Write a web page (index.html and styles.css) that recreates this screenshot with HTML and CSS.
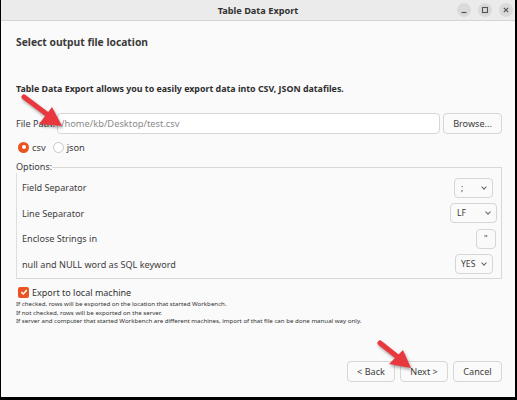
FILE: index.html
```html
<!DOCTYPE html>
<html>
<head>
<meta charset="utf-8">
<link rel="stylesheet" href="styles.css">
</head>
<body>
<div class="window">
  <div class="titlebar">
    <span class="title">Table Data Export</span>
    <div class="wbtns">
      <span class="wbtn"><svg width="14" height="14" viewBox="0 0 14 14"><path d="M4.5 9.5h5" stroke="#555" stroke-width="1.2"/></svg></span>
      <span class="wbtn"><svg width="14" height="14" viewBox="0 0 14 14"><rect x="4.5" y="4.5" width="5" height="5" fill="none" stroke="#555" stroke-width="1.1"/></svg></span>
      <span class="wbtn"><svg width="14" height="14" viewBox="0 0 14 14"><path d="M4.8 4.8l4.4 4.4M9.2 4.8l-4.4 4.4" stroke="#555" stroke-width="1.2"/></svg></span>
    </div>
  </div>
  <div class="content">
    <h1 class="heading">Select output file location</h1>
    <p class="desc">Table Data Export allows you to easily export data into CSV, JSON datafiles.</p>
    <div class="filerow">
      <span class="flabel">File Path:</span>
      <div class="input">/home/kb/Desktop/test.csv</div>
      <div class="btn browse">Browse...</div>
    </div>
    <div class="radios">
      <span class="radio on"></span><span class="rlabel">csv</span>
      <span class="radio"></span><span class="rlabel">json</span>
    </div>
    <fieldset class="options">
      <legend>Options:</legend>
      <div class="orow"><span>Field Separator</span><span class="combo c-sep">;<i class="chev"></i></span></div>
      <div class="orow"><span>Line Separator</span><span class="combo c-lf">LF<i class="chev"></i></span></div>
      <div class="orow"><span>Enclose Strings in</span><span class="combo c-q">"</span></div>
      <div class="orow"><span>null and NULL word as SQL keyword</span><span class="combo c-yes">YES<i class="chev"></i></span></div>
    </fieldset>
    <div class="checkrow">
      <span class="check"><svg width="10" height="10" viewBox="0 0 10 10"><path d="M2.3 5l2 2 3.6-4" fill="none" stroke="#fff" stroke-width="1.5"/></svg></span>
      <span class="clabel">Export to local machine</span>
    </div>
    <div class="notes">
      <div>If checked, rows will be exported on the location that started Workbench.</div>
      <div>If not checked, rows will be exported on the server.</div>
      <div>If server and computer that started Workbench are different machines, import of that file can be done manual way only.</div>
    </div>
    <div class="footer">
      <div class="btn fbtn">&lt; Back</div>
      <div class="btn fbtn">Next &gt;</div>
      <div class="btn fbtn">Cancel</div>
    </div>
  </div>
  <svg class="arrow a1" width="60" height="50" viewBox="0 0 60 50">
    <path d="M4 4 L28 22" stroke="#e8383d" stroke-width="5" stroke-linecap="round"/>
    <path d="M42 33 L19 31 L32 14 Z" fill="#e8383d"/>
  </svg>
  <svg class="arrow a2" width="50" height="40" viewBox="0 0 50 40">
    <path d="M4 4 L23 19" stroke="#e8383d" stroke-width="5" stroke-linecap="round"/>
    <path d="M35 29 L13 25 L27 11 Z" fill="#e8383d"/>
  </svg>
</div>
</body>
</html>
```
FILE: styles.css
```css
* { box-sizing: border-box; }
html, body { margin: 0; padding: 0; }
body { width: 517px; height: 400px; background: #000; font-family: "Noto Sans", "DejaVu Sans", sans-serif; color: #3c3c3c; }
.window { position: relative; width: 517px; height: 400px; border-left: 1px solid #000; border-right: 2px solid #000; border-bottom: 3px solid #000; background: #fafafa; }
.titlebar { height: 21px; background: #ebebeb; border-bottom: 1px solid #d4d4d4; display: flex; align-items: center; justify-content: center; position: relative; }
.title { font-size: 9.2px; font-weight: bold; color: #333; }
.wbtns { position: absolute; right: 2px; top: 3px; display: flex; gap: 7px; }
.wbtn { width: 14px; height: 14px; border-radius: 50%; background: #dadada; display: flex; }
.content { padding: 0 13px 0 15px; }
.heading { margin: 14px 0 0; font-size: 10.3px; line-height: 15px; font-weight: bold; color: #3a3a3a; }
.desc { margin: 32px 0 0; font-size: 8.85px; line-height: 14px; font-weight: bold; color: #2e2e2e; }
.filerow { margin-top: 17px; display: flex; align-items: center; height: 21px; }
.flabel { font-size: 9.1px; width: 41px; white-space: nowrap; }
.input { flex: 1; height: 21px; border: 1px solid #d6d6d6; border-radius: 4px; background: #fff; font-size: 9.3px; line-height: 19px; padding-left: 3px; color: #8a8a8a; }
.btn { border: 1px solid #d6d6d6; border-radius: 4px; background: #fafafa; font-size: 9.1px; display: flex; align-items: center; justify-content: center; color: #3c3c3c; }
.browse { margin-left: 3px; width: 59px; height: 21px; }
.radios { margin-top: 6px; height: 14px; display: flex; align-items: center; padding-left: 2px; }
.radio { width: 11px; height: 11px; border-radius: 50%; border: 1px solid #c8c8c8; background: #fff; }
.radio.on { border: none; background: #e95420; position: relative; }
.radio.on::after { content: ""; position: absolute; left: 3.5px; top: 3.5px; width: 4px; height: 4px; border-radius: 50%; background: #fff; }
.rlabel { font-size: 9.3px; margin-left: 3px; margin-right: 7px; }
.options { margin: 7px 0 0; padding: 2px 0 1px; border: 1px solid #d8d8d8; border-left-color: #dedede; min-width: 0; }
.options legend { padding: 0; margin-left: -1px; font-size: 9.1px; line-height: 12px; color: #3c3c3c; }
.orow { height: 25.5px; display: flex; align-items: center; justify-content: space-between; padding-left: 5px; font-size: 9.1px; }
.combo { height: 20px; border: 1px solid #d6d6d6; border-radius: 4px; background: #fafafa; display: flex; align-items: center; font-size: 8.6px; padding-left: 6px; position: relative; }
.chev { position: absolute; right: 6px; top: 6px; width: 4px; height: 4px; border-right: 1px solid #666; border-bottom: 1px solid #666; transform: rotate(45deg); }
.c-sep { width: 39px; margin-right: 8px; }
.c-lf { width: 47px; margin-right: 4px; padding-left: 6px; }
.c-q { width: 20px; margin-right: 5px; padding-left: 7px; }
.c-yes { width: 38px; margin-right: 8px; padding-left: 5px; }
.checkrow { margin-top: 6px; height: 14px; display: flex; align-items: center; padding-left: 2px; }
.check { width: 11px; height: 11px; background: #e95420; border-radius: 2px; display: flex; align-items: center; justify-content: center; }
.clabel { margin-left: 3px; font-size: 9px; color: #333; }
.notes { font-size: 6.15px; line-height: 8.5px; color: #333; margin-top: 1px; }
.footer { margin-top: 35px; display: flex; justify-content: flex-end; gap: 5px; }
.fbtn { width: 48px; height: 21px; }
.fbtn:nth-child(3) { width: 49px; }
.arrow { position: absolute; filter: drop-shadow(1px 2px 1.5px rgba(0,0,0,0.35)); }
.a1 { left: 19px; top: 93px; }
.a2 { left: 375px; top: 339px; }
```
